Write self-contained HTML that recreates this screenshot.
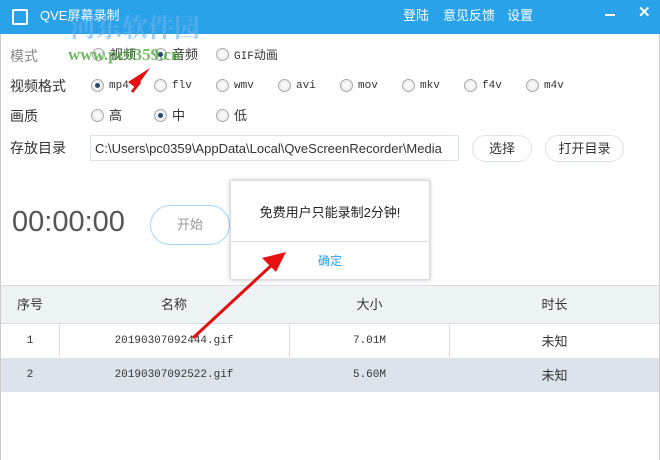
<!DOCTYPE html>
<html><head><meta charset="utf-8"><style>
*{margin:0;padding:0;box-sizing:border-box}
body{width:660px;height:460px;background:#fff;position:relative;overflow:hidden;font-family:"Liberation Sans","Noto Sans CJK SC",sans-serif;font-size:13px;color:#333;line-height:1}
.abs{position:absolute}
.bar{left:0;top:0;width:660px;height:34px;background:#2aa2ea}
.bar span{position:absolute;color:#fff;font-size:13px;top:9px}
.lbl{position:absolute;left:10px;font-size:14px;color:#333}
.r{position:absolute;width:13px;height:13px;border-radius:50%;border:1px solid #aaa;background:radial-gradient(#fff,#e4e4e4)}
.r.on::after{content:"";position:absolute;left:3px;top:3px;width:5px;height:5px;border-radius:50%;background:#2b4a66}
.rt{position:absolute;font-family:"Liberation Mono","Noto Sans CJK SC",monospace;font-size:11px;color:#333;line-height:1}
.cn{position:absolute;font-family:"Liberation Sans","Noto Sans CJK SC",sans-serif;font-size:13px;line-height:1}
.btn{position:absolute;border:1px solid #dde4ea;border-radius:14px;text-align:center;font-size:13px;color:#333;background:#fff}
.th,.td{position:absolute;text-align:center}
</style></head><body>
<div class="abs bar">
<div class="abs" style="left:12px;top:9px;width:16px;height:16px;border:2px solid #fff;border-radius:2px"></div>
<span style="left:40px">QVE屏幕录制</span>
<span style="left:403px">登陆</span><span style="left:443px">意见反馈</span><span style="left:507px">设置</span>
<div class="abs" style="left:605px;top:14px;width:10px;height:2px;background:#fff"></div>
<span style="left:638px;top:5px;font-size:15px;font-weight:bold">✕</span>
</div>
<div class="abs" style="left:0;top:34px;width:1px;height:426px;background:#ccc"></div>
<div class="abs" style="left:659px;top:34px;width:1px;height:426px;background:#ccc"></div>
<div class="lbl" style="top:49px;color:#888">模式</div>
<div class="r" style="left:92px;top:48px"></div><div class="cn" style="left:110px;top:48px">视频</div>
<div class="r on" style="left:154px;top:48px"></div><div class="cn" style="left:172px;top:48px">音频</div>
<div class="r" style="left:216px;top:48px"></div><div class="rt" style="left:234px;top:49px">GIF<span style="font-family:'Noto Sans CJK SC',sans-serif;font-size:12px">动画</span></div>
<div class="abs" style="left:70px;top:14px;font-size:26px;font-weight:bold;color:#6ab4ea;opacity:.6;font-family:'Noto Serif CJK SC',serif">河东软件园</div>
<div class="abs" style="left:68px;top:46px;font-size:17px;font-weight:bold;color:#4caa3c;opacity:.8;font-family:'Liberation Serif',serif">www.pc0359.cn</div>
<div class="lbl" style="top:79px">视频格式</div>
<div class="r on" style="left:91px;top:79px"></div><div class="rt" style="left:109px;top:81px">mp4</div>
<div class="r" style="left:154px;top:79px"></div><div class="rt" style="left:172px;top:81px">flv</div>
<div class="r" style="left:216px;top:79px"></div><div class="rt" style="left:234px;top:81px">wmv</div>
<div class="r" style="left:278px;top:79px"></div><div class="rt" style="left:296px;top:81px">avi</div>
<div class="r" style="left:340px;top:79px"></div><div class="rt" style="left:358px;top:81px">mov</div>
<div class="r" style="left:402px;top:79px"></div><div class="rt" style="left:420px;top:81px">mkv</div>
<div class="r" style="left:464px;top:79px"></div><div class="rt" style="left:482px;top:81px">f4v</div>
<div class="r" style="left:526px;top:79px"></div><div class="rt" style="left:544px;top:81px">m4v</div>
<div class="lbl" style="top:109px">画质</div>
<div class="r" style="left:91px;top:109px"></div><div class="cn" style="left:109px;top:109px">高</div>
<div class="r on" style="left:154px;top:109px"></div><div class="cn" style="left:172px;top:109px">中</div>
<div class="r" style="left:216px;top:109px"></div><div class="cn" style="left:234px;top:109px">低</div>
<div class="lbl" style="top:141px">存放目录</div>
<div class="abs" style="left:90px;top:135px;width:369px;height:26px;border:1px solid #dde4ea;padding:6px 4px;font-size:13px;white-space:nowrap">C:\Users\pc0359\AppData\Local\QveScreenRecorder\Media</div>
<div class="btn" style="left:472px;top:135px;width:60px;height:27px;line-height:25px">选择</div>
<div class="btn" style="left:545px;top:135px;width:79px;height:27px;line-height:25px">打开目录</div>
<div class="abs" style="left:12px;top:208px;font-size:29px;color:#555">00:00:00</div>
<div class="btn" style="left:150px;top:205px;width:80px;height:40px;line-height:38px;border-color:#a8d4f4;border-radius:20px;color:#999">开始</div>
<div class="abs" style="left:230px;top:180px;width:200px;height:100px;background:#fff;border:1px solid #ddd;box-shadow:0 0 4px rgba(0,0,0,.25)">
<div class="abs" style="left:0;top:25px;width:198px;text-align:center;font-size:13px;color:#222">免费用户只能录制2分钟!</div>
<div class="abs" style="left:0;top:60px;width:198px;height:1px;background:#ddd"></div>
<div class="abs" style="left:0;top:74px;width:198px;text-align:center;font-size:12px;color:#2a9ee8">确定</div>
</div>
<div class="abs" style="left:1px;top:285px;width:658px;height:39px;background:#eef3f6;border-top:1px solid #d8dde2;border-bottom:1px solid #d8dde2"></div>
<div class="th" style="left:1px;top:298px;width:58px">序号</div>
<div class="th" style="left:59px;top:298px;width:230px">名称</div>
<div class="th" style="left:289px;top:298px;width:161px">大小</div>
<div class="th" style="left:450px;top:298px;width:209px">时长</div>
<div class="abs" style="left:1px;top:358px;width:658px;height:34px;background:#dde3ea"></div>
<div class="abs" style="left:59px;top:324px;width:1px;height:34px;background:#ddd"></div>
<div class="abs" style="left:289px;top:324px;width:1px;height:34px;background:#ddd"></div>
<div class="abs" style="left:449px;top:324px;width:1px;height:34px;background:#ddd"></div>
<div class="td rt" style="left:1px;top:336px;width:58px">1</div>
<div class="td rt" style="left:59px;top:336px;width:230px">20190307092444.gif</div>
<div class="td rt" style="left:289px;top:336px;width:161px">7.01M</div>
<div class="td" style="left:450px;top:335px;width:209px">未知</div>
<div class="td rt" style="left:1px;top:370px;width:58px">2</div>
<div class="td rt" style="left:59px;top:370px;width:230px">20190307092522.gif</div>
<div class="td rt" style="left:289px;top:370px;width:161px">5.60M</div>
<div class="td" style="left:450px;top:369px;width:209px">未知</div>
<svg class="abs" style="left:0;top:0" width="660" height="460">
<line x1="193" y1="338" x2="275" y2="262" stroke="#e01010" stroke-width="3"/>
<polygon points="286,252 262,258 276,272" fill="#e81010"/>
<polygon points="150,68 128,82 136,88" fill="#e81010"/>
<line x1="132" y1="92" x2="140" y2="82" stroke="#e01010" stroke-width="3"/>
</svg>
</body></html>
